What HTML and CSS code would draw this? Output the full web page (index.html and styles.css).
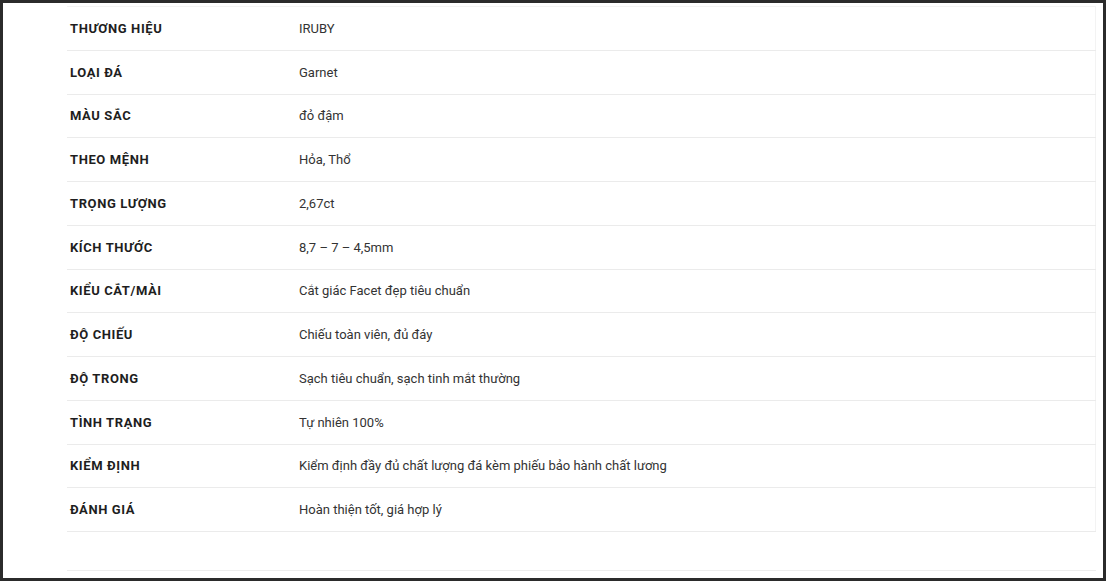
FILE: index.html
```html
<!DOCTYPE html>
<html lang="vi">
<head>
    <meta charset="UTF-8">
    <meta name="viewport" content="width=device-width, initial-scale=1.0">
    <title>Thông số đá Garnet</title>
    <link rel="stylesheet" href="styles.css">
</head>
<body>
    <div class="frame">
        <table class="specs">
            <tbody>
                <tr><th>Thương hiệu</th><td>IRUBY</td></tr>
                <tr><th>Loại đá</th><td>Garnet</td></tr>
                <tr><th>Màu sắc</th><td>đỏ đậm</td></tr>
                <tr><th>Theo mệnh</th><td>Hỏa, Thổ</td></tr>
                <tr><th>Trọng lượng</th><td>2,67ct</td></tr>
                <tr><th>Kích thước</th><td>8,7 – 7 – 4,5mm</td></tr>
                <tr><th>Kiểu cắt/mài</th><td>Cắt giác Facet đẹp tiêu chuẩn</td></tr>
                <tr><th>Độ chiếu</th><td>Chiếu toàn viên, đủ đáy</td></tr>
                <tr><th>Độ trong</th><td>Sạch tiêu chuẩn, sạch tinh mắt thường</td></tr>
                <tr><th>Tình trạng</th><td>Tự nhiên 100%</td></tr>
                <tr><th>Kiểm định</th><td>Kiểm định đầy đủ chất lượng đá kèm phiếu bảo hành chất lương</td></tr>
                <tr><th>Đánh giá</th><td>Hoàn thiện tốt, giá hợp lý</td></tr>
            </tbody>
        </table>
        <div class="foot"></div>
    </div>
</body>
</html>
```

FILE: styles.css
```css
html, body {
    margin: 0;
    padding: 0;
    background-color: #ffffff;
}
.frame {
    box-sizing: border-box;
    width: 1106px;
    height: 581px;
    border: 3px solid #2b2b2b;
    padding: 3px 7px 0 64px;
    font-family: Roboto, "Liberation Sans", Arial, sans-serif;
}
.specs {
    width: 100%;
    border-collapse: collapse;
    border-top: 1px solid #f3f3f3;
    border-right: 1px solid #f3f3f3;
}
.specs tr {
    height: 43.75px;
    border-bottom: 1px solid #ebebeb;
}
.specs th {
    width: 226px;
    padding: 0 0 0 3px;
    text-align: left;
    text-transform: uppercase;
    font-size: 13px;
    font-weight: bold;
    letter-spacing: 0.6px;
    color: #1e1e1e;
}
.specs td {
    padding: 0 0 0 3px;
    font-size: 13px;
    color: #333333;
}
.foot {
    margin-top: 38px;
    border-top: 1px solid #ededed;
}
```
